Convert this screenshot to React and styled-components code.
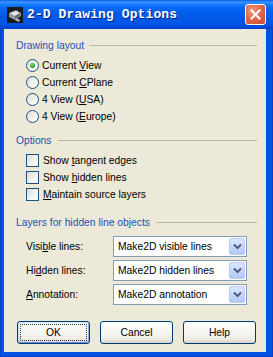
import React from "react";
import styled, { createGlobalStyle } from "styled-components";

const GlobalStyle = createGlobalStyle`
  html, body { margin: 0; padding: 0; background: #fff; }
  body { width: 273px; height: 357px; overflow: hidden; }
`;

const Window = styled.div`
  width: 273px;
  height: 357px;
  display: flex;
  flex-direction: column;
  font-family: "Liberation Sans", Arial, sans-serif;
  font-size: 10.3px;
  color: #000;
`;

const TitleBar = styled.div`
  height: 29px;
  flex: none;
  display: flex;
  align-items: center;
  padding: 0 7px 0 7px;
  box-sizing: border-box;
  background: linear-gradient(
    180deg,
    #0a5ae8 0px,
    #3d95ff 2px,
    #1a80ff 4px,
    #0a6cf8 7px,
    #0060ef 11px,
    #0058e6 18px,
    #0056e5 24px,
    #0049d8 27px,
    #003fcf 29px
  );
`;

const TitleIcon = styled.svg`
  width: 16px;
  height: 16px;
  flex: none;
`;

const TitleText = styled.div`
  margin-left: 4px;
  flex: 1;
  font-family: "Liberation Mono", "DejaVu Sans Mono", monospace;
  font-weight: bold;
  font-size: 13px;
  color: #fff;
  text-shadow: 1px 1px 0 #0a1e8a;
  letter-spacing: 0.1px;
`;

const CloseButton = styled.div`
  width: 21px;
  height: 21px;
  box-sizing: border-box;
  border: 1px solid #fff;
  border-radius: 3px;
  background: radial-gradient(circle at 35% 30%, #f09a80 0%, #e2694a 45%, #c94a2b 100%);
  display: flex;
  align-items: center;
  justify-content: center;
`;

const Frame = styled.div`
  flex: 1;
  display: flex;
  background: #0553e4;
  padding: 0 7px 5px 4px;
  box-shadow: inset 1px 0 0 #0a3fc8, inset -1px 0 0 #0a3fc8, inset 0 -1px 0 #0a3fc8;
`;

const Client = styled.div`
  flex: 1;
  background: #ece9d8;
  padding: 10px 9px 0 12px;
  display: flex;
  flex-direction: column;
`;

const GroupTitle = styled.div`
  display: flex;
  align-items: center;
  height: 13px;
  color: #2450b4;
  margin-top: ${(p) => p.$mt || 0}px;
  &::after {
    content: "";
    flex: 1;
    height: 1px;
    background: #b7b6a8;
    margin-left: 6px;
  }
`;

const OptionList = styled.div`
  display: flex;
  flex-direction: column;
  margin-top: 5px;
  padding-left: 10px;
`;

const OptionRow = styled.label`
  height: 17px;
  display: flex;
  align-items: center;
  gap: ${(p) => (p.$check ? 4 : 3)}px;
`;

const OptionText = styled.span`
  white-space: pre;
`;

const Radio = styled.span`
  width: 13px;
  height: 13px;
  box-sizing: border-box;
  border-radius: 50%;
  border: 1px solid #1c5180;
  background: linear-gradient(135deg, #dcdcd7 0%, #f4f4f0 60%, #ffffff 100%);
  display: flex;
  align-items: center;
  justify-content: center;
  flex: none;
  &::after {
    content: "";
    display: ${(p) => (p.$on ? "block" : "none")};
    width: 5px;
    height: 5px;
    border-radius: 50%;
    background: radial-gradient(circle at 40% 35%, #7be07b 0%, #2fb52f 50%, #1e8f1e 100%);
  }
`;

const Check = styled.span`
  width: 13px;
  height: 13px;
  box-sizing: border-box;
  border: 1px solid #1c5180;
  background: linear-gradient(135deg, #dcdcd7 0%, #f4f4f0 60%, #ffffff 100%);
  flex: none;
`;

const Key = styled.span`
  text-decoration: underline;
`;

const FieldGrid = styled.div`
  display: grid;
  grid-template-columns: 87px 134px;
  row-gap: 3px;
  margin-top: 7px;
  padding-left: 10px;
  align-items: center;
`;

const FieldLabel = styled.div``;

const Combo = styled.div`
  height: 21px;
  box-sizing: border-box;
  border: 1px solid #7f9db9;
  background: #fff;
  display: flex;
  align-items: stretch;
  padding: 1px;
`;

const ComboText = styled.div`
  flex: 1;
  display: flex;
  align-items: center;
  padding-left: 3px;
`;

const ComboButton = styled.div`
  width: 16px;
  box-sizing: border-box;
  border: 1px solid #bccbf0;
  border-radius: 2px;
  background: linear-gradient(180deg, #dce6fd 0%, #c6d5fb 50%, #b3c7f7 100%);
  display: flex;
  align-items: center;
  justify-content: center;
`;

const ButtonRow = styled.div`
  display: flex;
  gap: 10px;
  margin-top: 16px;
  padding-left: 1px;
`;

const Button = styled.div`
  position: relative;
  width: 73px;
  height: 23px;
  box-sizing: border-box;
  border: 1px solid #003c74;
  border-radius: 3px;
  background: linear-gradient(180deg, #ffffff 0%, #f5f4ef 55%, #ebe9e0 85%, #d6d0c5 100%);
  display: flex;
  align-items: center;
  justify-content: center;
  box-shadow: ${(p) =>
    p.$default ? "inset 0 1px 0 #cee7ff, inset 1px 0 0 #bcd4f6, inset -1px 0 0 #89ade4, inset 0 -1px 0 #6982ee" : "none"};
  &::after {
    content: "";
    display: ${(p) => (p.$default ? "block" : "none")};
    position: absolute;
    inset: 2px;
    border: 1px dotted #333;
  }
`;

function Chevron() {
  return (
    <svg width="9" height="7" viewBox="0 0 9 7">
      <path d="M1 1.5 L4.5 5 L8 1.5" fill="none" stroke="#4d6185" strokeWidth="2" />
    </svg>
  );
}

export default function App() {
  return (
    <>
      <GlobalStyle />
      <Window>
        <TitleBar>
          <TitleIcon viewBox="0 0 16 16">
            <rect x="0" y="0" width="16" height="16" fill="#1a1a1a" />
            <path d="M2 6 L9 3 L14 6 L14 9 L8 13 L2 10 Z" fill="#9a9a9a" />
            <path d="M3 6 L9 4 L13 6 L8 9 Z" fill="#e6e6e6" />
            <path d="M8 9 L13 6 L13 9 L8 12 Z" fill="#6a6a6a" />
            <path d="M9 11 L13 13 L12 15 L8 13 Z" fill="#bdbdbd" />
          </TitleIcon>
          <TitleText>2-D Drawing Options</TitleText>
          <CloseButton>
            <svg width="11" height="11" viewBox="0 0 11 11">
              <path d="M1.5 1.5 L9.5 9.5 M9.5 1.5 L1.5 9.5" stroke="#fff" strokeWidth="2" strokeLinecap="square" />
            </svg>
          </CloseButton>
        </TitleBar>
        <Frame>
          <Client>
            <GroupTitle>Drawing layout</GroupTitle>
            <OptionList>
              <OptionRow><Radio $on /><OptionText>Current <Key>V</Key>iew</OptionText></OptionRow>
              <OptionRow><Radio /><OptionText>Current <Key>C</Key>Plane</OptionText></OptionRow>
              <OptionRow><Radio /><OptionText>4 View (<Key>U</Key>SA)</OptionText></OptionRow>
              <OptionRow><Radio /><OptionText>4 View (<Key>E</Key>urope)</OptionText></OptionRow>
            </OptionList>
            <GroupTitle $mt={9}>Options</GroupTitle>
            <OptionList>
              <OptionRow $check><Check /><OptionText>Show <Key>t</Key>angent edges</OptionText></OptionRow>
              <OptionRow $check><Check /><OptionText>Show <Key>h</Key>idden lines</OptionText></OptionRow>
              <OptionRow $check><Check /><OptionText><Key>M</Key>aintain source layers</OptionText></OptionRow>
            </OptionList>
            <GroupTitle $mt={13}>Layers for hidden line objects</GroupTitle>
            <FieldGrid>
              <FieldLabel>Visi<Key>b</Key>le lines:</FieldLabel>
              <Combo><ComboText>Make2D visible lines</ComboText><ComboButton><Chevron /></ComboButton></Combo>
              <FieldLabel>Hi<Key>d</Key>den lines:</FieldLabel>
              <Combo><ComboText>Make2D hidden lines</ComboText><ComboButton><Chevron /></ComboButton></Combo>
              <FieldLabel><Key>A</Key>nnotation:</FieldLabel>
              <Combo><ComboText>Make2D annotation</ComboText><ComboButton><Chevron /></ComboButton></Combo>
            </FieldGrid>
            <ButtonRow>
              <Button $default>OK</Button>
              <Button>Cancel</Button>
              <Button>Help</Button>
            </ButtonRow>
          </Client>
        </Frame>
      </Window>
    </>
  );
}
